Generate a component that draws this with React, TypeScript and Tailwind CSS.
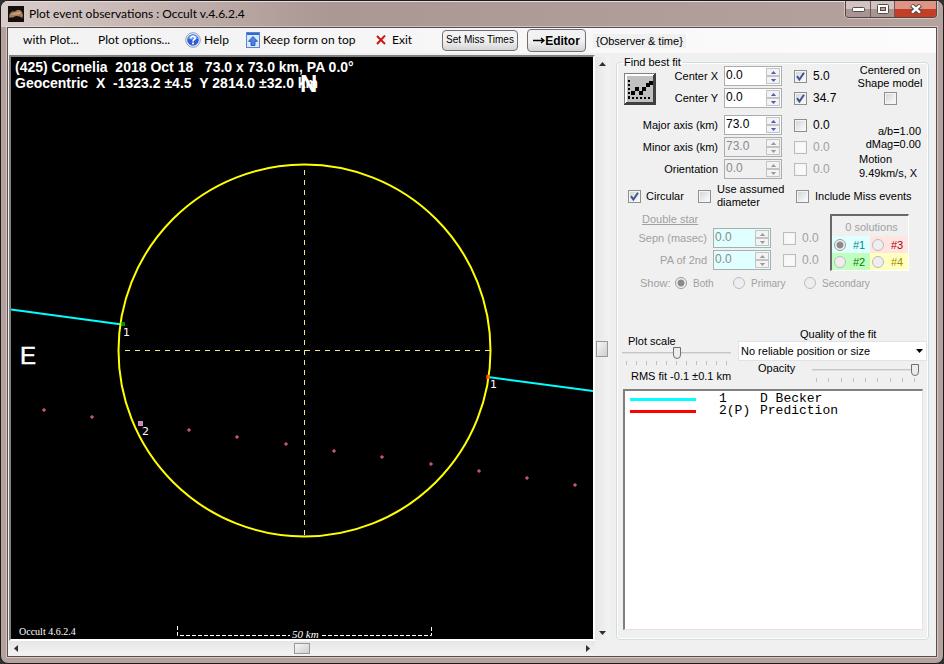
import { useState } from "react";
import type { ReactNode } from "react";
import clsx from "clsx";

// ---------------------------------------------------------------------------
// Data
// ---------------------------------------------------------------------------

interface FitParam {
  id: string;
  label: string;
  value: string;
  error: string;
  checked?: boolean;
  disabled?: boolean;
  tint?: boolean;
}

const CENTER_PARAMS: FitParam[] = [
  { id: "cx", label: "Center X", value: "0.0", error: "5.0", checked: true },
  { id: "cy", label: "Center Y", value: "0.0", error: "34.7", checked: true },
];

const AXIS_PARAMS: FitParam[] = [
  { id: "major", label: "Major axis (km)", value: "73.0", error: "0.0" },
  { id: "minor", label: "Minor axis (km)", value: "73.0", error: "0.0", disabled: true },
  { id: "orient", label: "Orientation", value: "0.0", error: "0.0", disabled: true },
];

const DOUBLE_PARAMS: FitParam[] = [
  { id: "sepn", label: "Sepn (masec)", value: "0.0", error: "0.0", disabled: true, tint: true },
  { id: "pa2", label: "PA of 2nd", value: "0.0", error: "0.0", disabled: true, tint: true },
];

const SOLUTIONS = [
  { label: "#1", cls: "bg-[#e0ffff] text-[#008b8b]" },
  { label: "#3", cls: "bg-[#ffe4e1] text-[#a80000]" },
  { label: "#2", cls: "bg-[#c0ffc0] text-[#008000]" },
  { label: "#4", cls: "bg-[#ffffc0] text-[#a09000]" },
];

const OBSERVERS = [
  { num: "1", name: "D Becker", cls: "bg-[#00ffff]" },
  { num: "2(P)", name: "Prediction", cls: "bg-[#ff0000]" },
];

// predicted path, one dot per time step
const PATH_DOTS = [
  [33, 353], [81, 360], [178, 373], [226, 380], [275, 387], [323, 394],
  [371, 400], [420, 407], [468, 414], [516, 421], [564, 428],
];

const NB = "\u00a0";

// ---------------------------------------------------------------------------
// Controls
// ---------------------------------------------------------------------------

function Check({ id, checked, disabled }: { id: string; checked?: boolean; disabled?: boolean }) {
  return (
    <span className="relative block size-[13px] shrink-0">
      <input
        id={id}
        type="checkbox"
        defaultChecked={checked}
        disabled={disabled}
        className="peer block size-[13px] appearance-none border border-[#8e8f8f] bg-linear-to-br from-[#cfd3d8] to-white shadow-[inset_0_0_0_1px_#f4f4f4] disabled:border-[#bcbcbc] disabled:from-[#f6f6f6] disabled:to-[#fbfbfb]"
      />
      <svg viewBox="0 0 13 13" className="pointer-events-none absolute inset-0 hidden size-[13px] peer-checked:block">
        <path d="M3 6.2 5.4 9.6 10 2.8" fill="none" stroke="#3f5590" strokeWidth="2" />
      </svg>
    </span>
  );
}

function Radio({ name, label, checked }: { name: string; label: string; checked?: boolean }) {
  return (
    <input
      type="radio"
      name={name}
      aria-label={label}
      defaultChecked={checked}
      disabled
      className="size-3 shrink-0 appearance-none rounded-full border border-[#bcbcbc] bg-[#eeeeee] checked:border-[#9a9a9a] checked:bg-[radial-gradient(circle,#8a8a8a_0_3px,#f4f4f4_4px)]"
    />
  );
}

function Arrow({ dir, className }: { dir: "up" | "down" | "left" | "right"; className?: string }) {
  const points = {
    up: "0,4 3.5,0 7,4",
    down: "0,0 3.5,4 7,0",
    left: "4,0 0,3.5 4,7",
    right: "0,0 4,3.5 0,7",
  }[dir];
  const flat = dir === "up" || dir === "down";
  return (
    <svg viewBox={flat ? "0 0 7 4" : "0 0 4 7"} className={clsx(flat ? "h-1 w-[7px]" : "h-[7px] w-1", className)}>
      <polygon points={points} fill="currentColor" />
    </svg>
  );
}

function Spinner({ param }: { param: FitParam }) {
  const { id, value, disabled, tint, label } = param;
  const btn = clsx(
    "flex h-2 w-[14px] items-center justify-center border border-[#c4c4c4] bg-[#f3f3f3]",
    disabled ? "text-[#9a9a9a]" : "text-[#4a62b8]",
  );
  return (
    <div
      className={clsx(
        "flex h-5 w-[58px] items-center border border-[#abadb3] pr-px",
        tint ? "bg-[#e0ffff]" : disabled ? "bg-[#f0f0f0]" : "bg-white",
      )}
    >
      <input
        id={id}
        defaultValue={value}
        disabled={disabled}
        className={clsx("h-[18px] w-0 flex-1 pb-[2px] pl-px text-xs leading-4 outline-none", disabled && "text-[#8a8a8a]")}
      />
      <div className="flex flex-col">
        <button type="button" disabled={disabled} aria-label={`${label} up`} className={btn}>
          <Arrow dir="up" className="h-[3px] w-[5px]" />
        </button>
        <button type="button" disabled={disabled} aria-label={`${label} down`} className={btn}>
          <Arrow dir="down" className="h-[3px] w-[5px]" />
        </button>
      </div>
    </div>
  );
}

function ParamRow({ param, labelClass }: { param: FitParam; labelClass: string }) {
  return (
    <div className={clsx("flex h-[22px] items-center", param.tint && "text-[#a0a0a0]")}>
      <label htmlFor={param.id} className={clsx("pr-[6px] text-right", labelClass)}>
        {param.label}
      </label>
      <Spinner param={param} />
      <div className="ml-3 flex items-center gap-[6px]">
        <Check id={`${param.id}-fit`} checked={param.checked} disabled={param.disabled} />
        <label htmlFor={`${param.id}-fit`} className={clsx("text-xs", param.disabled && "text-[#a0a0a0]")}>
          {param.error}
        </label>
      </div>
    </div>
  );
}

function Slider({ id, max, value, className }: { id: string; max: number; value: number; className: string }) {
  return (
    <div className={className}>
      <input
        id={id}
        type="range"
        max={max}
        defaultValue={value}
        className="block h-3 w-full appearance-none bg-linear-to-b from-transparent from-40% via-[#b4b4b4] via-40% to-transparent to-60% [&::-webkit-slider-thumb]:h-3 [&::-webkit-slider-thumb]:w-2 [&::-webkit-slider-thumb]:appearance-none [&::-webkit-slider-thumb]:rounded-b-sm [&::-webkit-slider-thumb]:border [&::-webkit-slider-thumb]:border-[#707070] [&::-webkit-slider-thumb]:bg-[#ececec]"
      />
      <div className="mt-[2px] flex justify-between px-1">
        {Array.from({ length: max + 1 }, (_, i) => (
          <span key={i} className="h-1 w-px bg-[#c0c0c0]" />
        ))}
      </div>
    </div>
  );
}

function MenuItem({ icon, children, className }: { icon?: ReactNode; children: ReactNode; className?: string }) {
  return (
    <button type="button" className={clsx("flex shrink-0 items-center gap-[3px] pb-px whitespace-nowrap", className)}>
      {icon}
      {children}
    </button>
  );
}

// ---------------------------------------------------------------------------
// Icons
// ---------------------------------------------------------------------------

function AppIcon() {
  return (
    <svg viewBox="0 0 16 16" className="size-4">
      <rect width="16" height="16" fill="#141010" />
      <path d="M1 11.5 1.5 8 4 5.5 7 5.5 9 4 12 4 14 6 15 9 14.5 12 11.5 10.5 8 10 4.5 11.5Z" fill="#a67c58" />
      <path d="M3 9 5.5 7 9 6.5 12 5.5 13 8 9 8.5Z" fill="#c8a27a" />
    </svg>
  );
}

function HelpIcon() {
  return (
    <svg viewBox="0 0 16 16" className="size-4">
      <circle cx="8" cy="8" r="7.3" fill="#e8eefa" stroke="#8c9cc0" />
      <circle cx="8" cy="8" r="5.8" fill="#2c5fd0" />
      <path d="M3 6.5a5.3 5.3 0 0 1 10 0Q8 9 3 6.5Z" fill="#6f9bef" />
      <path d="M5.8 6.4C5.8 3.5 10.3 3.6 10.2 6.2 10.1 7.7 8 7.7 8 9.4" fill="none" stroke="#fff" strokeWidth="1.7" />
      <rect x="7.1" y="10.5" width="1.8" height="1.8" fill="#fff" />
    </svg>
  );
}

function TopIcon() {
  return (
    <svg viewBox="0 0 14 16" className="h-4 w-[14px]">
      <rect x=".5" y=".5" width="13" height="15" fill="#dce9fc" stroke="#5b86cf" />
      <rect x="1" y="1" width="12" height="2" fill="#2f6ad8" />
      <path d="M7 4.5 11.5 9.3H9V13.5H5V9.3H2.5Z" fill="#4d83e6" stroke="#1d4aa8" strokeWidth=".8" />
    </svg>
  );
}

function ExitIcon() {
  return (
    <svg viewBox="0 0 10 10" className="size-[10px]">
      <path d="M1 1 9 9M9 .5 1 9" stroke="#c81414" strokeWidth="1.9" />
    </svg>
  );
}

function FitIcon() {
  const steps = [[7, 18], [11, 14], [15, 18], [18, 14], [22, 10], [25, 8]];
  return (
    <svg viewBox="0 0 32 32" className="size-8" shapeRendering="crispEdges">
      <rect width="32" height="32" fill="#404040" />
      <path d="M0 0H31L30 1H1V30L0 31Z" fill="#808080" />
      <path d="M1 1H30L28 3H3V28L1 30Z" fill="#fff" />
      <rect x="3" y="3" width="26" height="26" fill="#c0c0c0" />
      <path d="M5 7V25" stroke="#000" strokeWidth="2" strokeDasharray="2 2" />
      <path d="M4 25H27" stroke="#000" strokeWidth="2" strokeDasharray="2 2" />
      {steps.map(([x, y]) => (
        <rect key={`${x}-${y}`} x={x} y={y} width="4" height="4" fill="#000" />
      ))}
    </svg>
  );
}

// ---------------------------------------------------------------------------
// Window parts
// ---------------------------------------------------------------------------

function TitleBar() {
  return (
    <header className="flex h-[26px] shrink-0 items-start justify-between bg-linear-to-r from-[#d9cdca] via-[#ab9793] via-35% to-[#b5a29e] pl-[7px] shadow-[inset_0_1px_0_#e6dcda]">
      <div className="flex h-[26px] items-center gap-[5px] font-['Lato','Open_Sans',sans-serif] text-xs text-black">
        <AppIcon />
        <h1>Plot event observations : Occult v.4.6.2.4</h1>
      </div>
      <div className="mr-[6px] flex h-[17px] overflow-hidden rounded-b border border-t-0 border-[#55443f] ring-1 ring-white/40">
        <button type="button" aria-label="Minimize" className="flex w-[25px] items-center justify-center border-r border-[#6b5955] bg-linear-to-b from-[#d0c3c0] from-50% to-[#a89490] to-50%">
          <svg viewBox="0 0 13 5" className="h-[5px] w-[13px]">
            <rect x=".5" y=".5" width="12" height="4" rx="1" fill="#fff" stroke="#544b4b" />
          </svg>
        </button>
        <button type="button" aria-label="Maximize" className="flex w-6 items-center justify-center border-r border-[#6b5955] bg-linear-to-b from-[#d0c3c0] from-50% to-[#a89490] to-50%">
          <svg viewBox="0 0 12 10" className="h-[10px] w-3">
            <rect x=".5" y=".5" width="11" height="9" rx="1" fill="#fff" stroke="#544b4b" />
            <rect x="3.5" y="3.5" width="5" height="3" fill="#b5a29e" stroke="#544b4b" />
          </svg>
        </button>
        <button type="button" aria-label="Close" className="flex w-[41px] items-center justify-center bg-linear-to-b from-[#dd9484] from-50% to-[#c23e27] to-50%">
          <svg viewBox="0 0 12 10" className="h-[10px] w-3">
            <path d="M1.5 1 10.5 9M10.5 1 1.5 9" stroke="#4c4545" strokeWidth="4.4" />
            <path d="M2 1.4 10 8.6M10 1.4 2 8.6" stroke="#fff" strokeWidth="2.6" />
          </svg>
        </button>
      </div>
    </header>
  );
}

function Toolbar() {
  return (
    <nav className="flex h-[25px] shrink-0 items-center bg-linear-to-r from-[#f2f2f2] to-[#fcfcfc] pl-[15px] font-['Lato','Open_Sans',sans-serif] text-xs">
      <MenuItem className="w-[75px]">with Plot...</MenuItem>
      <MenuItem className="w-[87px]">Plot options...</MenuItem>
      <MenuItem className="w-[61px]" icon={<HelpIcon />}>Help</MenuItem>
      <MenuItem className="w-[130px]" icon={<TopIcon />}>Keep form on top</MenuItem>
      <MenuItem className="w-[66px] gap-[6px]" icon={<ExitIcon />}>Exit</MenuItem>
      <button type="button" className="mb-px h-[21px] w-[76px] shrink-0 rounded-sm border border-[#707070] bg-linear-to-b from-[#f2f2f2] from-50% to-[#d4d4d4] font-['Liberation_Sans',sans-serif] text-[10px] whitespace-nowrap">
        Set Miss Times
      </button>
      <button type="button" className="ml-[9px] flex h-[23px] w-[59px] shrink-0 items-center justify-center rounded-sm border border-[#707070] bg-linear-to-b from-[#f2f2f2] from-50% to-[#d4d4d4] font-['Liberation_Sans',sans-serif] text-xs font-bold">
        <svg viewBox="0 0 12 7" className="h-[7px] w-3">
          <path d="M0 3.5H11M8 1 11 3.5 8 6" fill="none" stroke="#000" strokeWidth="1.3" />
        </svg>
        Editor
      </button>
      <span className="ml-[7px] bg-[#f0f0f0] px-[3px] font-['Liberation_Sans',sans-serif] text-[11px] leading-[14px] whitespace-nowrap">
        {"{Observer & time}"}
      </span>
    </nav>
  );
}

function Plot() {
  return (
    <svg viewBox="0 0 582 582" className="h-full w-full font-['Liberation_Sans',sans-serif]" fill="none">
      <g fill="#fff" className="text-[14px] font-bold">
        <text x="4" y="15">{`(425) Cornelia ${NB}2018 Oct 18 ${NB} 73.0 x 73.0 km, PA 0.0°`}</text>
        <text x="4" y="31">{`Geocentric ${NB}X ${NB}-1323.2 ±4.5 ${NB}Y 2814.0 ±32.0 km`}</text>
      </g>
      <text x="289" y="35" fill="#fff" className="text-[24px] font-bold">N</text>
      <text x="9" y="307" fill="#fff" stroke="#fff" strokeWidth=".5" className="text-[24px]">E</text>

      <path d="M114 293.5H479M293.5 113V479" stroke="#f0e68c" strokeDasharray="5 5" />
      <path d="M0 252.5 111 267.5M477 320 582 334" stroke="#00ffff" strokeWidth="2" />
      <circle cx="293.5" cy="293.5" r="186" stroke="#ffff00" strokeWidth="2" />
      <rect x="110" y="265" width="4" height="4" fill="#00b400" fillOpacity=".8" />
      <rect x="475" y="318" width="4" height="4" fill="#ff4500" fillOpacity=".8" />

      {PATH_DOTS.map(([x, y]) => (
        <circle key={x} cx={x} cy={y} r="1.3" fill="#b03a70" stroke="#e0609a" strokeWidth=".8" />
      ))}
      <rect x="127" y="364" width="5" height="5" fill="#b8a0c0" />
      <rect x="128" y="365" width="3" height="3" fill="#ff69b4" />

      <g fill="#fff" className="font-['DejaVu_Sans',sans-serif] text-[11px]">
        <text x="112" y="279">1</text>
        <text x="131" y="378">2</text>
        <text x="479" y="331">1</text>
      </g>

      <path d="M166.5 569V578.5H279M311 578.5H420.5V569" stroke="#fff" strokeDasharray="4 2" />
      <g fill="#fff" className="font-['Liberation_Serif',serif] text-[11px]">
        <text x="281" y="581" className="italic">50 km</text>
        <text x="8" y="578" className="text-[10px]">Occult 4.6.2.4</text>
      </g>
    </svg>
  );
}

function ScrollBar({ vertical }: { vertical?: boolean }) {
  return (
    <div
      className={clsx(
        "flex items-center justify-between from-[#e6e6e6] to-[#f3f3f3] text-[#303030]",
        vertical ? "w-[14px] flex-col bg-linear-to-r py-[5px]" : "h-[14px] bg-linear-to-b px-[5px]",
      )}
    >
      <button type="button" aria-label={vertical ? "Scroll up" : "Scroll left"}>
        <Arrow dir={vertical ? "up" : "left"} className="block" />
      </button>
      <span
        className={clsx(
          "border border-[#989898] bg-linear-to-br from-[#f6f6f6] to-[#cfcfcf]",
          vertical ? "h-4 w-3" : "h-[11px] w-4",
        )}
      />
      <button type="button" aria-label={vertical ? "Scroll down" : "Scroll right"}>
        <Arrow dir={vertical ? "down" : "right"} className="block" />
      </button>
    </div>
  );
}

function FitPanel() {
  const [quality, setQuality] = useState("No reliable position or size");
  return (
    <fieldset className="flex min-h-0 w-full flex-1 flex-col rounded-sm border border-[#d0dce4] pb-[9px] shadow-[inset_0_0_0_1px_#fff]">
      <legend className="ml-[5px] px-[2px] leading-[6px]">Find best fit</legend>

      <div className="flex justify-between pr-[7px]">
        <div className="relative">
          <button type="button" aria-label="Find best fit" className="absolute top-2 left-[7px] size-8">
            <FitIcon />
          </button>
          {CENTER_PARAMS.map((p) => (
            <ParamRow key={p.id} param={p} labelClass="w-[107px]" />
          ))}
          <div className="mt-[5px]">
            {AXIS_PARAMS.map((p) => (
              <ParamRow key={p.id} param={p} labelClass="w-[107px]" />
            ))}
          </div>
        </div>
        <div className="-mt-px flex w-[62px] flex-col text-[11px] leading-[13px] whitespace-nowrap">
          <label htmlFor="centered" className="flex flex-col items-center">
            <span>Centered on</span>
            <span>Shape model</span>
          </label>
          <div className="mt-[2px] flex justify-center">
            <Check id="centered" />
          </div>
          <p className="mt-5 flex flex-col items-end">
            <span>a/b=1.00</span>
            <span>dMag=0.00</span>
          </p>
          <p className="mt-px flex flex-col leading-[14px]">
            <span>Motion</span>
            <span>9.49km/s, X</span>
          </p>
        </div>
      </div>

      <div className="mt-[5px] flex h-[22px] items-center pl-[11px]">
        <Check id="circular" checked />
        <label htmlFor="circular" className="w-[57px] pl-[5px]">Circular</label>
        <Check id="assumed" />
        <label htmlFor="assumed" className="w-[85px] pl-[6px] text-[11px] leading-[13px]">
          Use assumed diameter
        </label>
        <Check id="miss" />
        <label htmlFor="miss" className="pl-[6px]">Include Miss events</label>
      </div>

      <div className="mt-[5px] flex justify-between pr-[19px] text-[#a0a0a0]">
        <div>
          <h2 className="pl-[25px] leading-[15px] underline">Double star</h2>
          {DOUBLE_PARAMS.map((p) => (
            <ParamRow key={p.id} param={p} labelClass="w-24" />
          ))}
        </div>
        <div className="mt-[2px] w-[79px] border-t-2 border-r border-b border-l-2 border-t-[#696969] border-r-white border-b-white border-l-[#696969]">
          <p className="h-5 pl-[3px] text-center leading-[22px]">0 solutions</p>
          <div className="grid grid-cols-2">
            {SOLUTIONS.map((s) => (
              <label key={s.label} className={clsx("flex h-[17px] items-center gap-[7px] pt-px pl-[2px]", s.cls)}>
                <Radio name="solution" label={s.label} checked={s.label === "#1"} />
                {s.label}
              </label>
            ))}
          </div>
        </div>
      </div>

      <div className="mt-1 flex h-4 items-center pl-[23px] text-[#a0a0a0]">
        <span className="w-[35px]">Show:</span>
        {["Both", "Primary", "Secondary"].map((s) => (
          <label key={s} className={clsx("flex items-center gap-[6px] text-[10px]", s === "Both" ? "w-[58px]" : "w-[71px]")}>
            <Radio name="show" label={s} checked={s === "Both"} />
            {s}
          </label>
        ))}
      </div>

      <div className="mt-9 flex justify-between pr-px pl-[5px]">
        <div className="w-[109px] pt-2">
          <label htmlFor="scale" className="block pl-[6px] leading-[12px]">Plot scale</label>
          <Slider id="scale" max={10} value={5} className="w-full" />
          <p className="mt-1 pl-[9px] leading-[14px] whitespace-nowrap">RMS fit -0.1 ±0.1 km</p>
        </div>
        <div className="w-[189px] pt-px">
          <label htmlFor="quality" className="block pl-[62px] leading-[13px]">Quality of the fit</label>
          <div className="relative">
            <select
              id="quality"
              value={quality}
              onChange={(e) => setQuality(e.target.value)}
              className="block h-5 w-full appearance-none border border-[#e0e3e8] bg-white px-[2px]"
            >
              <option>No reliable position or size</option>
              <option>Astrometry only</option>
              <option>Reliable size</option>
            </select>
            <Arrow dir="down" className="pointer-events-none absolute top-2 right-1" />
          </div>
          <div className="flex justify-between pt-px pr-2 pl-5">
            <label htmlFor="opacity" className="leading-[13px]">Opacity</label>
            <Slider id="opacity" max={8} value={8} className="mt-[2px] w-[107px]" />
          </div>
        </div>
      </div>

      <ul className="mr-[5px] ml-[6px] mt-[6px] flex-1 border-t-2 border-r border-b border-l-2 border-t-[#808080] border-r-[#e3e3e3] border-b-[#e3e3e3] border-l-[#808080] bg-white pt-[2px] pl-[5px] font-['Liberation_Mono',monospace] text-[13px] leading-[12px]">
        {OBSERVERS.map((o) => (
          <li key={o.num} className="flex h-3 items-center whitespace-pre">
            <span className={clsx("h-[3px] w-[66px]", o.cls)} />
            <span className="w-[64px] pl-[23px]">{o.num}</span>
            <span>{o.name}</span>
          </li>
        ))}
      </ul>
    </fieldset>
  );
}

// ---------------------------------------------------------------------------
// Main
// ---------------------------------------------------------------------------

export default function App() {
  return (
    <div className="h-screen bg-[#303030]">
      <div className="flex h-full flex-col overflow-hidden rounded-lg border border-[#1c1c1c] bg-[#b5a29e] text-black">
        <TitleBar />
        <main className="mx-[6px] mb-[6px] flex min-h-0 flex-1 flex-col border border-[#5a4d4a] bg-[#f0f0f0] font-['Liberation_Sans',sans-serif] text-[11px] ring-1 ring-white/40">
          <Toolbar />
          <div className="flex min-h-0 flex-1 pr-[7px]">
            <div className="flex min-w-0 flex-1 flex-col pt-[2px] pb-px pl-px">
              <div className="min-h-0 flex-1 border-2 border-t-[#808080] border-r-white border-b-white border-l-[#808080] bg-black">
                <Plot />
              </div>
              <ScrollBar />
            </div>
            <div className="flex pt-1 pb-4">
              <ScrollBar vertical />
            </div>
            <div className="ml-[7px] flex w-[313px] shrink-0 flex-col pt-[6px] pb-4">
              <FitPanel />
            </div>
          </div>
        </main>
      </div>
    </div>
  );
}
